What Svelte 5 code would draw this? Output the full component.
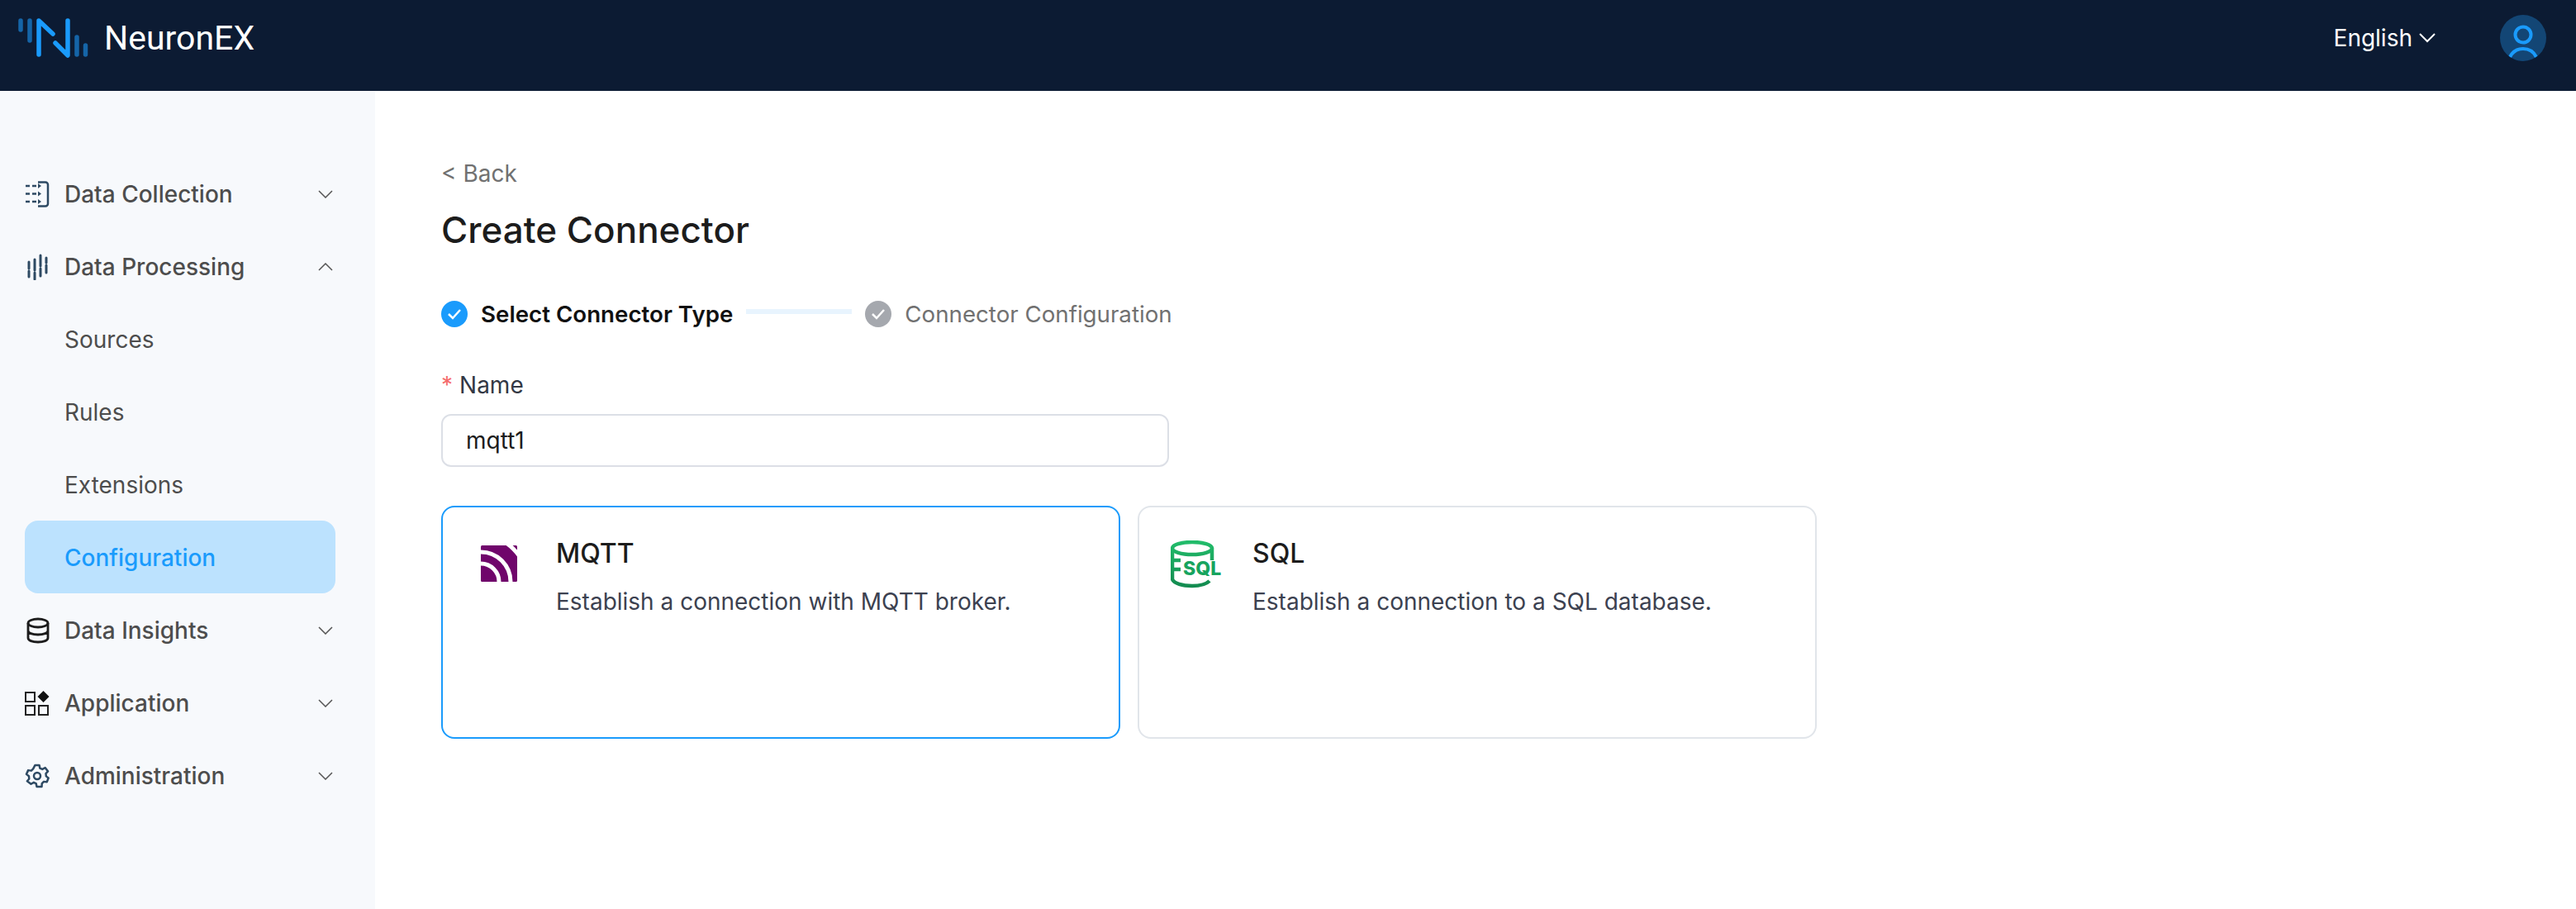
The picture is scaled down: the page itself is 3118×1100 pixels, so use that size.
<script>
  const cards = [
    { key: "mqtt", title: "MQTT", desc: "Establish a connection with MQTT broker.", active: true },
    { key: "sql", title: "SQL", desc: "Establish a connection to a SQL database.", active: false },
  ];
  const bottomMenu = [
    { key: "insights", label: "Data Insights" },
    { key: "app", label: "Application" },
    { key: "admin", label: "Administration" },
  ];
</script>

<div class="page">
  <header class="topbar">
    <div class="brand">
      <svg class="logo" width="86" height="48" viewBox="0 0 86 48" fill="none" stroke-linecap="round" stroke-width="5.500">
        <path d="M3 3v11M14 3v24M71 23v21M81.500 33v11" stroke="#1565a8" />
        <path d="M25 44V3L42 19M45 30L60 45V3" stroke="#1a9bfc" stroke-linejoin="round" />
      </svg>
      <span class="brand-name">NeuronEX</span>
    </div>
    <div class="top-right">
      <span class="lang">English</span>
      <svg class="lang-arrow" width="20" height="12" viewBox="0 0 20 12" fill="none" stroke="#fff" stroke-width="2"><path d="M1 1l9 9 9-9" /></svg>
      <div class="avatar">
        <svg width="56" height="56" viewBox="0 0 56 56" fill="none" stroke="#1a9bfc" stroke-width="4">
          <circle cx="28" cy="24" r="9.500" />
          <path d="M12 51c4-8 10-10 16-10s12 2 16 10" />
        </svg>
      </div>
    </div>
  </header>

  <div class="body">
    <aside class="sidebar">
      <div class="menu-item">
        <svg class="menu-icon" width="28" height="32" viewBox="0 0 28 32" fill="none" stroke="#2e4a63" stroke-width="2.500">
          <path d="M0 6h5M8 6h5M0 15.500h5M8 15.500h5M0 25h5M8 25h5" />
          <path d="M15 3l4 3-4 3zM15 12.500l4 3-4 3zM15 22l4 3-4 3z" fill="#2e4a63" stroke="none" />
          <path d="M15 1.500h9a3 3 0 0 1 3 3v23a3 3 0 0 1-3 3h-9" />
        </svg>
        <span>Data Collection</span>
        <svg class="chev" width="18" height="10" viewBox="0 0 18 10" fill="none" stroke="#555" stroke-width="1.500"><path d="M1 1l8 8 8-8" /></svg>
      </div>
      <div class="menu-item">
        <svg class="menu-icon" width="28" height="32" viewBox="0 0 28 32" fill="none" stroke="#2e4a63" stroke-width="3" stroke-linecap="round">
          <path d="M4 10v8M4 21v7M11 7v13M11 23v8M18 2v13M18 18v9M25 5v6M25 14v9" />
        </svg>
        <span>Data Processing</span>
        <svg class="chev" width="18" height="10" viewBox="0 0 18 10" fill="none" stroke="#555" stroke-width="1.500"><path d="M1 9l8-8 8 8" /></svg>
      </div>
      <div class="sub-item">Sources</div>
      <div class="sub-item">Rules</div>
      <div class="sub-item">Extensions</div>
      <div class="sub-item selected">Configuration</div>
      {#each bottomMenu as item}
        <div class="menu-item">
          {#if item.key === "insights"}
            <svg class="menu-icon" width="28" height="32" viewBox="0 0 28 32" fill="none" stroke="#1c1c1c" stroke-width="2.800">
              <ellipse cx="15" cy="7" rx="12" ry="5" />
              <path d="M3 7v18c0 3 5 5 12 5s12-2 12-5V7M3 16c0 3 5 5 12 5s12-2 12-5" />
            </svg>
          {:else if item.key === "app"}
            <svg class="menu-icon" width="30" height="30" viewBox="0 0 30 30" fill="none" stroke="#222" stroke-width="2">
              <rect x="1" y="2" width="11" height="11" />
              <rect x="1" y="18" width="11" height="11" />
              <rect x="17" y="18" width="11" height="11" />
              <path d="M22.500 0l7 7-7 7-7-7z" fill="#111" stroke="none" />
            </svg>
          {:else}
            <svg class="menu-icon" width="30" height="30" viewBox="0 0 24 24" fill="none" stroke="#2e4a63" stroke-width="2" stroke-linejoin="round">
              <circle cx="12" cy="12" r="3.200" />
              <path d="M10 1.500h4l.7 3 2.300 1 2.700-1.500 2.700 3.500-2 2.200.3 2.600 2.200 1.700-1.500 3.800-3-.3-1.800 1.800-.2 3h-4.800l-.7-3-2.200-1-2.700 1.500L2.300 17l1.900-2.200-.2-2.600-2.400-1.900 1.700-3.800 3 .4 1.800-1.800z" />
            </svg>
          {/if}
          <span>{item.label}</span>
          <svg class="chev" width="18" height="10" viewBox="0 0 18 10" fill="none" stroke="#555" stroke-width="1.500"><path d="M1 1l8 8 8-8" /></svg>
        </div>
      {/each}
    </aside>

    <main class="content">
      <div class="back">&lt; Back</div>
      <h1>Create Connector</h1>

      <div class="steps">
        <span class="dot blue">
          <svg width="18" height="14" viewBox="0 0 18 14" fill="none" stroke="#fff" stroke-width="2.500"><path d="M2 7l5 5 9-10" /></svg>
        </span>
        <span class="step-label current">Select Connector Type</span>
        <span class="step-line"></span>
        <span class="dot grey">
          <svg width="18" height="14" viewBox="0 0 18 14" fill="none" stroke="#fff" stroke-width="2.500"><path d="M2 7l5 5 9-10" /></svg>
        </span>
        <span class="step-label">Connector Configuration</span>
      </div>

      <label class="field-label" for="name"><span class="req">*</span>Name</label>
      <input id="name" class="input" type="text" value="mqtt1" />

      <div class="cards">
        {#each cards as card}
          <div class="card" class:active={card.active}>
            <div class="card-icon">
              {#if card.key === "mqtt"}
                <svg class="mqtt-icon" width="44" height="44" viewBox="0 0 44 44">
                  <rect width="44" height="44" rx="1.500" fill="#70056b" />
                  <g fill="none" stroke="#fff" stroke-width="5">
                    <path d="M0 22A22 22 0 0 1 22 44" />
                    <path d="M0 8A36 36 0 0 1 36 44" />
                    <path d="M0 -12A56 56 0 0 1 56 44" />
                  </g>
                </svg>
              {:else}
                <svg class="sql-icon" width="58" height="58" viewBox="0 0 58 58" fill="none">
                  <defs>
                    <linearGradient id="sqlg" gradientUnits="userSpaceOnUse" x1="0" y1="0" x2="0" y2="58">
                      <stop offset="0" stop-color="#22bd6b" />
                      <stop offset="1" stop-color="#13894f" />
                    </linearGradient>
                  </defs>
                  <ellipse cx="26" cy="9.500" rx="24" ry="7.500" stroke="url(#sqlg)" stroke-width="4.500" />
                  <path d="M2 9.500V47c2 5 12 8 24 8 9 0 17-2 21-6M50 9.500V24M2 24h10M2 35h10" stroke="url(#sqlg)" stroke-width="4.500" />
                </svg>
                <span class="sql-mark">SQL</span>
              {/if}
            </div>
            <div class="card-text">
              <div class="card-title">{card.title}</div>
              <div class="card-desc">{card.desc}</div>
            </div>
          </div>
        {/each}
      </div>
    </main>
  </div>
</div>

<style>
  :global(body) {
    margin: 0;
    background: #fff;
  }
  .page {
    width: 3118px;
    height: 1100px;
    display: flex;
    flex-direction: column;
    font-family: Inter, "Noto Sans", sans-serif;
    overflow: hidden;
  }
  .topbar {
    height: 110px;
    flex: none;
    background: #0c1b33;
    display: flex;
    justify-content: space-between;
    padding: 0 36px 0 22px;
    box-sizing: border-box;
  }
  .brand {
    display: flex;
    align-items: flex-start;
    padding-top: 22px;
  }
  .brand-name {
    color: #fff;
    font-family: Roboto, sans-serif;
    font-size: 41px;
    line-height: 48px;
    margin-left: 18px;
    font-weight: 400;
  }
  .top-right {
    display: flex;
    align-items: center;
    height: 92px;
  }
  .lang {
    color: #fff;
    font-size: 28px;
  }
  .lang-arrow {
    margin-left: 8px;
    margin-right: 78px;
  }
  .avatar {
    width: 56px;
    height: 56px;
    border-radius: 50%;
    background: #134675;
    overflow: hidden;
  }
  .avatar svg {
    display: block;
  }
  .body {
    flex: 1;
    display: flex;
  }
  .sidebar {
    width: 454px;
    flex: none;
    background: #f7f9fc;
    box-sizing: border-box;
    padding: 80px 48px 0 30px;
  }
  .menu-item,
  .sub-item {
    height: 88px;
    padding-top: 1px;
    display: flex;
    align-items: center;
    font-size: 28px;
    color: #4d4d4d;
    box-sizing: border-box;
  }
  .menu-item {
    font-weight: 500;
  }
  .menu-icon {
    width: 30px;
    flex: none;
    margin-right: 18px;
  }
  .chev {
    margin-left: auto;
    margin-right: 3px;
  }
  .sub-item {
    padding-left: 48px;
  }
  .sub-item.selected {
    background: #bce2fe;
    color: #1a9bfc;
    font-weight: 500;
    border-radius: 16px;
  }
  .content {
    flex: 1;
    padding: 82px 0 0 80px;
  }
  .back {
    font-size: 28px;
    line-height: 36px;
    color: #717171;
  }
  h1 {
    margin: 20px 0 0;
    font-size: 44px;
    line-height: 60px;
    font-weight: 500;
    color: #1c1c1c;
  }
  .steps {
    margin-top: 54px;
    display: flex;
    align-items: center;
    height: 36px;
    font-size: 27.700px;
    color: #717171;
  }
  .dot {
    width: 32px;
    height: 32px;
    border-radius: 50%;
    display: flex;
    align-items: center;
    justify-content: center;
  }
  .dot.blue {
    background: #1a9bfc;
  }
  .dot.grey {
    background: #a5a8ae;
  }
  .step-label {
    margin-left: 16px;
  }
  .step-label.current {
    color: #111;
    font-weight: 600;
  }
  .step-line {
    width: 128px;
    height: 6px;
    background: #e8f4fe;
    margin: 0 16px 6px;
  }
  .field-label {
    display: block;
    margin-top: 50px;
    font-size: 28px;
    line-height: 36px;
    color: #333844;
  }
  .req {
    color: #f56c6c;
    margin-right: 8px;
  }
  .input {
    display: block;
    margin-top: 17px;
    width: 881px;
    height: 64px;
    box-sizing: border-box;
    border: 2px solid #dcdfe6;
    border-radius: 12px;
    padding: 0 28px;
    font: 28px Inter, sans-serif;
    color: #1c1c1c;
    outline: none;
  }
  .cards {
    display: flex;
    gap: 21px;
    margin-top: 47px;
  }
  .card {
    width: 822px;
    height: 282px;
    box-sizing: border-box;
    border: 2px solid #e1e5ea;
    border-radius: 16px;
    display: flex;
    padding: 36px 0 0 46px;
  }
  .card.active {
    border-color: #1a9bfc;
  }
  .card-icon {
    width: 44px;
    position: relative;
    flex: none;
    margin-top: 4px;
  }
  .mqtt-icon {
    display: block;
    margin-top: 6px;
  }
  .sql-icon {
    display: block;
    margin-left: -8px;
  }
  .sql-mark {
    position: absolute;
    left: 7px;
    top: 22px;
    font-size: 23px;
    font-weight: 800;
    color: #17a45e;
    line-height: 24px;
  }
  .card-text {
    margin-left: 47px;
  }
  .card-title {
    font-size: 32px;
    line-height: 40px;
    font-weight: 500;
    color: #1c1c1c;
  }
  .card-desc {
    margin-top: 18px;
    font-size: 28px;
    line-height: 40px;
    color: #3c4150;
  }
</style>
